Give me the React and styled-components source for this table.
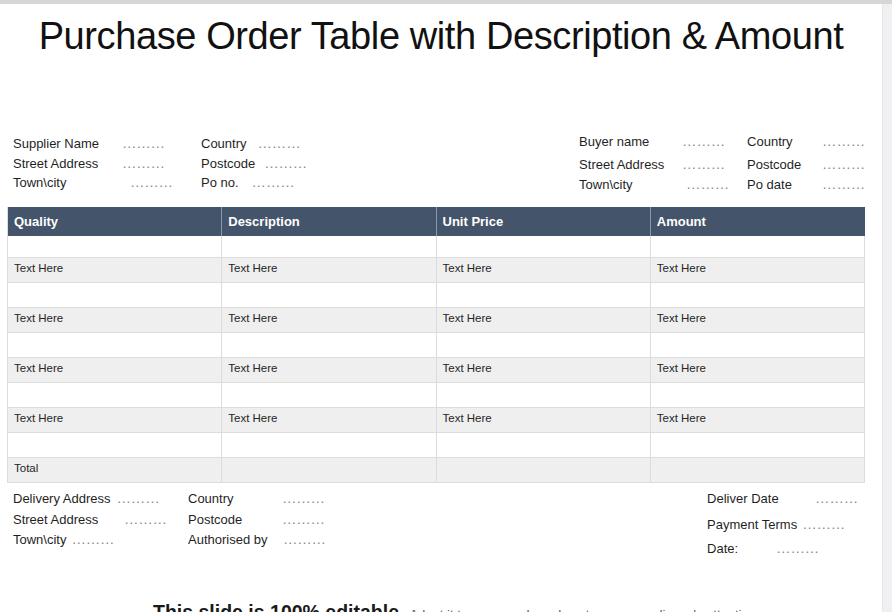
import React from "react";
import styled, { createGlobalStyle } from "styled-components";

const Global = createGlobalStyle`
  html, body { margin: 0; padding: 0; background: #fff; overflow: hidden; }
  body { font-family: "Liberation Sans", Arial, sans-serif; color: #1f1f1f; }
`;

const Frame = styled.div`
  width: 892px;
  height: 612px;
  display: flex;
  flex-direction: column;
  overflow: hidden;
`;
const TopBar = styled.div`
  height: 4px;
  flex: none;
  background: #d6d6d6;
`;
const Body = styled.div`
  flex: 1;
  display: flex;
  min-height: 0;
`;
const Slide = styled.div`
  width: 882px;
  background: #fff;
  display: flex;
  flex-direction: column;
`;
const Strip = styled.div`
  flex: 1;
  background: #f0f0f2;
  border-left: 1px solid #e6e6e8;
`;
const Title = styled.h1`
  margin: 10px 0 0 0;
  text-align: center;
  font-weight: 400;
  font-size: 38px;
  line-height: 44px;
  letter-spacing: -0.4px;
  color: #111;
`;
const InfoBar = styled.div`
  display: flex;
  justify-content: space-between;
  margin-top: ${(p) => p.top}px;
  padding: 0 0 0 13px;
`;
const Block = styled.div`
  display: flex;
  flex-direction: column;
  padding-top: ${(p) => p.top || 0}px;
  padding-right: ${(p) => p.right || 0}px;
`;
const Row = styled.div`
  display: flex;
  align-items: baseline;
  height: ${(p) => p.h || 20}px;
`;
const Field = styled.div`
  display: flex;
  align-items: baseline;
  width: ${(p) => (p.w ? `${p.w}px` : "auto")};
  flex: none;
`;
const Label = styled.span`
  font-size: 13px;
  color: #1f1f1f;
  white-space: nowrap;
  min-width: ${(p) => p.w || 0}px;
`;
const Dots = styled.span`
  font-size: 14.5px;
  color: #8a8a8a;
  letter-spacing: -0.2px;
  margin-left: ${(p) => p.gap || 0}px;
  white-space: nowrap;
`;
const Table = styled.div`
  margin: ${(p) => p.top}px 17px 0 7px;
  display: grid;
  grid-template-columns: repeat(4, 1fr);
  border-left: 1px solid #dcdcdc;
`;
const Head = styled.div`
  height: 29px;
  background: #44546a;
  color: #fff;
  font-weight: 700;
  font-size: 13px;
  display: flex;
  align-items: center;
  padding-left: 6px;
  border-right: 1px solid ${(p) => (p.last ? "#44546a" : "#8a97a8")};
`;
const Cell = styled.div`
  height: ${(p) => p.h || 24}px;
  background: ${(p) => (p.shade ? "#efefef" : "#fff")};
  border-right: 1px solid #dcdcdc;
  border-bottom: 1px solid #dcdcdc;
  font-size: 11.5px;
  color: #262626;
  display: flex;
  align-items: center;
  padding: 0 0 3px 6px;
  box-sizing: border-box;
`;
const Footer = styled.div`
  margin-top: 7px;
  padding: 0 0 0 13px;
  display: flex;
  justify-content: space-between;
`;
const Note = styled.div`
  margin-top: 37px;
  padding-left: 153px;
  white-space: nowrap;
`;
const NoteBold = styled.span`
  font-size: 19.5px;
  font-weight: 700;
  color: #1a1a1a;
`;
const NoteSmall = styled.span`
  font-size: 13px;
  color: #555;
  margin-left: 5px;
`;

const DOTS = "………";

const F = ({ label, lw, gap, w }) => (
  <Field w={w}>
    <Label w={lw}>{label}</Label>
    <Dots gap={gap}>{DOTS}</Dots>
  </Field>
);

const rows = [
  [false, false],
  [true, true],
  [false, false],
  [true, true],
  [false, false],
  [true, true],
  [false, false],
  [true, true],
  [false, false],
  [true, "total"],
];

const App = () => (
  <Frame>
    <Global />
    <TopBar />
    <Body>
      <Slide>
        <Title>Purchase Order Table with Description &amp; Amount</Title>
        <InfoBar top={75}>
          <Block top={2}>
            <Row h={19.5}>
              <F w={188} label="Supplier Name" lw={109} />
              <F label="Country" gap={11} />
            </Row>
            <Row h={19.5}>
              <F w={188} label="Street Address" lw={109} />
              <F label="Postcode" gap={9} />
            </Row>
            <Row h={19.5}>
              <F w={188} label="Town\city" lw={117} />
              <F label="Po no." gap={13} />
            </Row>
          </Block>
          <Block right={17}>
            <Row h={23}>
              <F w={168} label="Buyer name" lw={103} />
              <F label="Country" lw={75} />
            </Row>
            <Row h={19.5}>
              <F w={168} label="Street Address" lw={103} />
              <F label="Postcode" lw={75} />
            </Row>
            <Row h={20}>
              <F w={168} label="Town\city" lw={107} />
              <F label="Po date" lw={75} />
            </Row>
          </Block>
        </InfoBar>
        <Table top={11}>
          {["Quality", "Description", "Unit Price", "Amount"].map((h, i) => (
            <Head key={h} last={i === 3}>
              {h}
            </Head>
          ))}
          {rows.map(([shade, kind], r) =>
            [0, 1, 2, 3].map((c) => (
              <Cell key={`${r}-${c}`} shade={shade} h={r === 0 ? 22 : 25}>
                {kind === true ? "Text Here" : kind === "total" && c === 0 ? "Total" : ""}
              </Cell>
            ))
          )}
        </Table>
        <Footer>
          <Block>
            <Row h={21}>
              <F w={175} label="Delivery Address" gap={6} />
              <F label="Country" lw={94} />
            </Row>
            <Row h={20}>
              <F w={175} label="Street Address" lw={111} />
              <F label="Postcode" lw={94} />
            </Row>
            <Row h={20}>
              <F w={175} label="Town\city" gap={5} />
              <F label="Authorised by" lw={95} />
            </Row>
          </Block>
          <Block right={24}>
            <Row h={26}>
              <F label="Deliver Date" lw={108} />
            </Row>
            <Row h={24}>
              <F label="Payment Terms" gap={5} />
            </Row>
            <Row h={24}>
              <F label="Date:" lw={69} />
            </Row>
          </Block>
        </Footer>
        <Note>
          <NoteBold>This slide is 100% editable.</NoteBold>
          <NoteSmall>Adapt it to your needs and capture your audience's attention.</NoteSmall>
        </Note>
      </Slide>
      <Strip />
    </Body>
  </Frame>
);

export default App;
